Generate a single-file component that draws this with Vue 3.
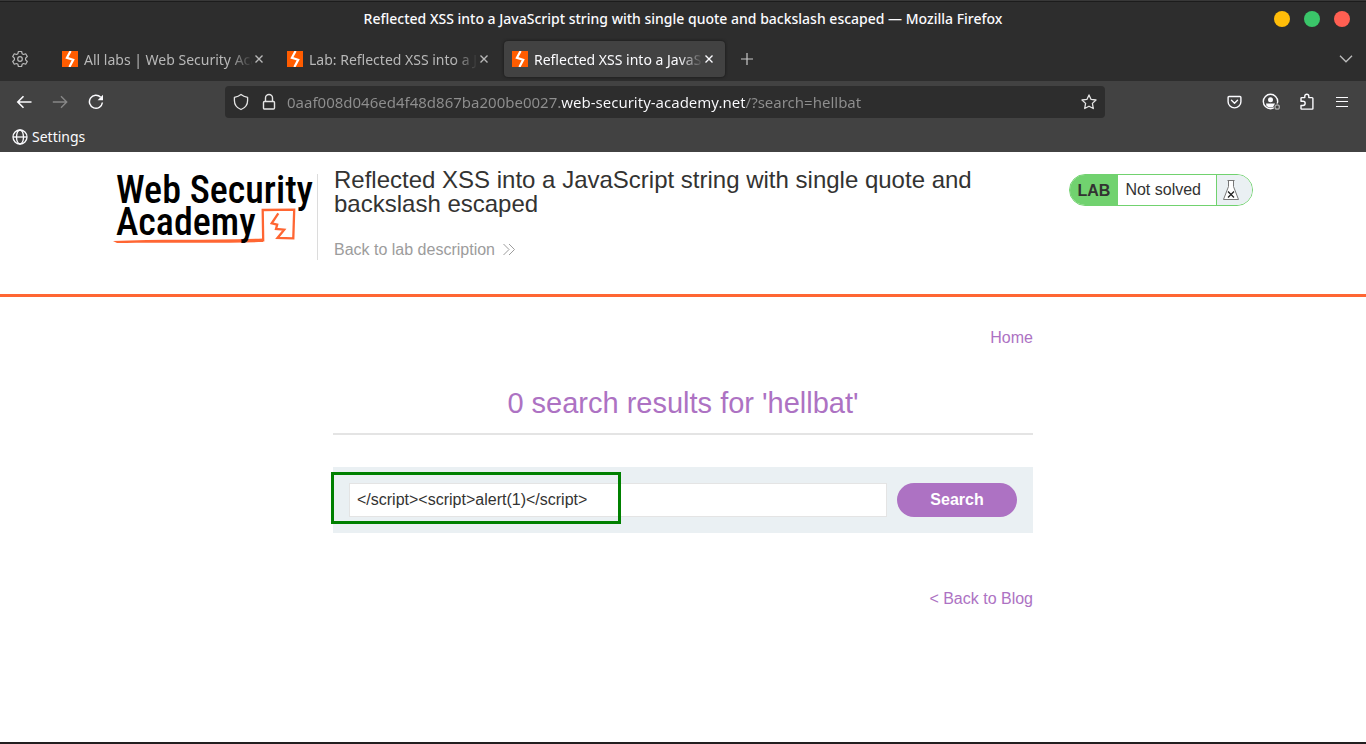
<script setup>
import { ref } from 'vue'

const windowTitle = 'Reflected XSS into a JavaScript string with single quote and backslash escaped — Mozilla Firefox'

const tabs = [
  { title: 'All labs | Web Security Academy', active: false },
  { title: 'Lab: Reflected XSS into a JavaScript string', active: false },
  { title: 'Reflected XSS into a JavaScript string', active: true },
]

const address = ref('0aaf008d046ed4f48d867ba200be0027.web-security-academy.net/?search=hellbat')
const term = ref('<\/script><script>alert(1)<\/script>')
</script>

<template>
  <div class="window">
    <header class="titlebar">
      <span class="window-title">{{ windowTitle }}</span>
      <div class="window-buttons">
        <button class="dot yellow" aria-label="Minimise"></button>
        <button class="dot green" aria-label="Maximise"></button>
        <button class="dot red" aria-label="Close"></button>
      </div>
    </header>

    <nav class="tabstrip" aria-label="Tabs">
      <button class="icon-btn gear" aria-label="Options">
        <svg width="18" height="18" viewBox="0 0 18 18" fill="none" stroke="#b8b8b8" stroke-width="1.2" stroke-linejoin="round">
          <path d="M7.4 1.5h3.2l.5 2.2 1.4.8 2.2-.7 1.6 2.7-1.7 1.6v1.8l1.7 1.6-1.6 2.7-2.2-.7-1.4.8-.5 2.2H7.4l-.5-2.2-1.4-.8-2.2.7-1.6-2.7 1.7-1.6V8.1L1.7 6.5l1.6-2.7 2.2.7 1.4-.8z" />
          <circle cx="9" cy="9" r="2.3" />
        </svg>
      </button>
      <div v-for="tab in tabs" :key="tab.title" class="tab" :class="{ active: tab.active }">
        <svg class="favicon" width="16" height="16" viewBox="0 0 16 16">
          <rect width="16" height="16" fill="#ff5c00" />
          <path d="M8.600 0 4.900 6.800 11.200 8.800 7.400 16" fill="none" stroke="#fff" stroke-width="2.200" />
        </svg>
        <button class="tab-title">{{ tab.title }}</button>
        <button class="tab-close" aria-label="Close tab">
          <svg width="8" height="8" viewBox="0 0 8 8" fill="none" stroke="currentColor" stroke-width="1.4"><path d="M.5.5l7 7M7.500.5l-7 7" /></svg>
        </button>
      </div>
      <button class="icon-btn plus" aria-label="New tab">
        <svg width="12" height="12" viewBox="0 0 12 12" fill="none" stroke="#c8c8c8" stroke-width="1.2"><path d="M6 0v12M0 6h12" /></svg>
      </button>
      <button class="icon-btn all-tabs" aria-label="List all tabs">
        <svg width="14" height="8" viewBox="0 0 14 8" fill="none" stroke="#bdbdbd" stroke-width="1.3"><path d="M1 .8l6 6 6-6" /></svg>
      </button>
    </nav>

    <div class="toolbar">
      <div class="nav-buttons">
        <button class="icon-btn" aria-label="Back">
          <svg width="16" height="16" viewBox="0 0 16 16" fill="none" stroke="#fbfbfe" stroke-width="1.6"><path d="M15.500 8H2M7.500 2.300L1.800 8l5.700 5.700" /></svg>
        </button>
        <button class="icon-btn" aria-label="Forward">
          <svg width="16" height="16" viewBox="0 0 16 16" fill="none" stroke="#878787" stroke-width="1.4"><path d="M.8 8h13.500M9 2.300L14.700 8 9 13.700" /></svg>
        </button>
        <button class="icon-btn" aria-label="Reload">
          <svg width="16" height="16" viewBox="0 0 16 16" fill="none" stroke="#fbfbfe" stroke-width="1.5"><path d="M12.700 3.300A6.500 6.500 0 1 0 14.400 8.500" /><path d="M15 .8v5.400H9.600z" fill="#fbfbfe" stroke="none" /></svg>
        </button>
      </div>

      <div class="urlbar">
        <svg width="16" height="18" viewBox="0 0 16 18" fill="none" stroke="#e4e4e4" stroke-width="1.3" stroke-linejoin="round"><path d="M8 1.500c2 1.700 4 2.400 6.600 2.900v3c0 4.300-2.300 7.300-6.600 9.100-4.300-1.800-6.600-4.800-6.600-9.100v-3C4 3.900 6 3.200 8 1.500z" /></svg>
        <svg class="lock" width="14" height="18" viewBox="0 0 14 18" fill="none" stroke="#e4e4e4" stroke-width="1.4"><rect x="1.500" y="8.500" width="11" height="7.500" rx="1" /><path d="M3.500 8.500V5a3.500 3.500 0 0 1 7 0v3.500" /></svg>
        <input v-model="address" class="address" type="text" aria-label="Address" />
        <button class="icon-btn" aria-label="Bookmark this page">
          <svg width="16" height="16" viewBox="0 0 16 16" fill="none" stroke="#e4e4e4" stroke-width="1.3" stroke-linejoin="round"><path d="M8 .9l2.100 4.500 4.900.6-3.600 3.400.9 5.100L8 12.200l-4.300 2.300.9-5.100L1 6l4.900-.6z" /></svg>
        </button>
      </div>

      <div class="tools">
        <button class="icon-btn" aria-label="Save to Pocket">
          <svg width="16" height="16" viewBox="0 0 16 16" fill="none" stroke="#fbfbfe" stroke-width="1.4" stroke-linejoin="round" stroke-linecap="round"><path d="M2 2.500h11a.9.900 0 0 1 .9.900v4.300a6.400 6.200 0 0 1-12.800 0V3.400a.9.900 0 0 1 .9-.9z" /><path d="M4.500 6.300l3 2.900 3-2.900" /></svg>
        </button>
        <button class="icon-btn" aria-label="Account">
          <svg width="19" height="18" viewBox="0 0 19 18" fill="none"><circle cx="8.500" cy="8.500" r="7.200" stroke="#fbfbfe" stroke-width="1.4" /><circle cx="8.500" cy="6.800" r="2.500" fill="#fbfbfe" /><path d="M4 10.500h9c0 2.500-2 3.900-4.500 3.900S4 13 4 10.500z" fill="#fbfbfe" /><circle cx="15.200" cy="14" r="3.600" fill="#424242" /><circle cx="15.200" cy="14" r="2.200" stroke="#aaa" stroke-width="1.3" /></svg>
        </button>
        <button class="icon-btn" aria-label="Extensions">
          <svg width="16" height="18" viewBox="0 0 16 18" fill="none" stroke="#fbfbfe" stroke-width="1.4" stroke-linejoin="round"><path d="M1 8.200V5.500a.9.900 0 0 1 .9-.9h2.900V3.200a2 2 0 0 1 4 0v1.400H12a.9.900 0 0 1 .9.900v10a.6.600 0 0 1-.6.600H1.700a.7.700 0 0 1-.7-.7v-2.900h2a1.800 1.800 0 0 0 0-4.300z" /></svg>
        </button>
        <button class="icon-btn" aria-label="Menu">
          <svg width="14" height="14" viewBox="0 0 14 14" fill="none" stroke="#fbfbfe" stroke-width="1.2"><path d="M1 2.500h12M1 6.500h12M1 11.500h12" /></svg>
        </button>
      </div>
    </div>

    <div class="bookmarks">
      <a class="bookmark" href="#">
        <svg width="16" height="16" viewBox="0 0 16 16" fill="none" stroke="#fbfbfe" stroke-width="1.3"><circle cx="8" cy="8" r="7" /><ellipse cx="8" cy="8" rx="3.500" ry="7" /><path d="M1 8h14" /></svg>
        <span>Settings</span>
      </a>
    </div>

    <div class="page">
      <section class="lab-header">
        <div class="lab-container">
          <a class="logo" href="#" aria-label="Web Security Academy">
            <svg width="200" height="86" viewBox="0 0 200 86">
              <path d="M0 67c45-2 100-.5 150-2.500V68C100 69.500 45 68 4 69z" fill="#ff6633" />
              <path d="M150.200 67.500 149.700 36l31.500-.3-.9 28.600-15.800-.3 6.700-8.300-8.200-.8 1.200-4.300-5.500-1.300 6.600-10" fill="none" stroke="#ff6633" stroke-width="2.3" />
              <text class="logo-text" x="3" y="29">Web Security</text>
              <text class="logo-text" x="3" y="61">Academy</text>
            </svg>
          </a>
          <div class="lab-title">
            <h2>Reflected XSS into a JavaScript string with single quote and backslash escaped</h2>
            <a class="back-link" href="#">
              <span>Back to lab description</span>
              <svg width="12" height="14" viewBox="0 0 12 14" fill="none" stroke="#9c9c9c" stroke-width="1"><path d="M.5 1L6 6.500.5 12M6 1l5.500 5.500L6 12" /></svg>
            </a>
          </div>
          <div class="lab-status">
            <span class="lab-tag">LAB</span>
            <p>Not solved</p>
            <span class="flask">
              <svg width="18" height="22" viewBox="0 0 18 22"><path d="M5.500 1.500h7M6.500 1.500v6L1.500 20.500h15l-5-13v-6" fill="#fff" stroke="#777" stroke-width="1" /><path d="M6 12.500l6 6M12 12.500l-6 6" stroke="#222" stroke-width="1.3" /></svg>
            </span>
          </div>
        </div>
      </section>

      <main class="content">
        <nav class="home"><a href="#">Home</a></nav>
        <h1>0 search results for 'hellbat'</h1>
        <form class="search" @submit.prevent>
          <input v-model="term" type="text" aria-label="Search the blog" />
          <button type="submit">Search</button>
          <div class="highlight"></div>
        </form>
        <div class="back-blog"><a href="#">&lt; Back to Blog</a></div>
      </main>
    </div>
  </div>
</template>

<style>
body {
  margin: 0;
  background: #fff;
}
</style>

<style scoped>
* {
  box-sizing: border-box;
}
button {
  border: 0;
  padding: 0;
  background: none;
  font: inherit;
  color: inherit;
}
a {
  text-decoration: none;
}
svg {
  display: block;
  flex: none;
}
.window {
  display: flex;
  flex-direction: column;
  min-height: 100vh;
  background: #2d2d2d;
  color: #fbfbfe;
  font: 14px/20px "Noto Sans", "Open Sans", sans-serif;
}
.titlebar {
  display: grid;
  grid-template-columns: 1fr auto 1fr;
  align-items: center;
  height: 38px;
  padding: 0 16px 2px;
  border-top: 1px solid #383838;
  box-shadow: inset 0 1px #1c1c1c;
}
.window-title {
  grid-column: 2;
  font-weight: 500;
}
.window-buttons {
  display: flex;
  justify-content: flex-end;
  gap: 14px;
}
.dot {
  width: 16px;
  height: 16px;
  border-radius: 50%;
}
.yellow { background: #ffbd09; }
.green { background: #3ac569; }
.red { background: #ff5f52; }

.icon-btn {
  display: flex;
  align-items: center;
  justify-content: center;
}
.tabstrip {
  display: flex;
  align-items: center;
  gap: 4px;
  height: 43px;
  padding: 0 13px 2px 11px;
}
.gear {
  width: 18px;
  margin-right: 21px;
}
.tab {
  display: flex;
  align-items: center;
  width: 221px;
  height: 36px;
  padding: 0 8px;
  border-radius: 4px;
  color: #b8b8b8;
}
.tab.active {
  background: #424242;
  color: #fbfbfe;
  box-shadow: 0 0 3px #151515;
}
.tab-title {
  flex: 1;
  min-width: 0;
  margin-left: 6px;
  padding-top: 2px;
  overflow: hidden;
  white-space: nowrap;
  text-align: left;
  mask-image: linear-gradient(to right, #000 calc(100% - 24px), transparent);
}
.tab-close {
  display: flex;
  margin: 0 4px 0 2px;
}
.plus {
  width: 36px;
  height: 36px;
}
.all-tabs {
  margin-left: auto;
}

.toolbar {
  display: flex;
  align-items: center;
  justify-content: space-between;
  height: 42px;
  padding: 0 17px 0 16px;
  background: #424242;
}
.nav-buttons,
.tools {
  display: flex;
  align-items: center;
  gap: 20px;
}
.tools {
  gap: 19px;
}
.nav-buttons {
  width: 209px;
}
.urlbar {
  display: flex;
  flex: 1;
  align-items: center;
  height: 32px;
  margin-right: 122px;
  padding: 0 8px;
  border-radius: 4px;
  background: #2d2d2d;
}
.lock {
  margin: 0 11px 0 13px;
}
.address {
  flex: 1;
  min-width: 0;
  border: 0;
  padding: 0;
  outline: 0;
  font: inherit;
  font-size: 15px;
  color: transparent;
  background: linear-gradient(to right, #8f8f8f 273px, #fbfbfe 273px 458px, #8f8f8f 458px);
  background-clip: text;
  -webkit-background-clip: text;
}
.bookmarks {
  display: flex;
  align-items: center;
  height: 29px;
  padding: 0 12px 2px;
  background: #424242;
}
.bookmark {
  display: flex;
  align-items: center;
  gap: 4px;
  color: #fbfbfe;
}

.page {
  flex: 1;
  background: #fff;
  border-bottom: 2px solid #231f20;
  color: #333332;
  font: 16px/20px "Liberation Sans", Arial, sans-serif;
}
.lab-header {
  padding: 16px 16px 34px;
  border-bottom: 3px solid #ff6633;
}
.lab-container {
  display: flex;
  align-items: flex-start;
  max-width: 1140px;
  margin: 0 auto;
}
.logo {
  margin-top: 6px;
  padding-right: 4px;
  border-right: 1px solid #dcdcdc;
}
.logo-text {
  font: 500 38px "Roboto Condensed", "Liberation Sans Narrow", Roboto, sans-serif;
  fill: #000;
}
.lab-title {
  flex: 1;
  padding-left: 16px;
}
h2 {
  max-width: 650px;
  margin: 0 0 24px;
  font-size: 24px;
  line-height: 24px;
  font-weight: 400;
}
.back-link {
  display: inline-flex;
  align-items: center;
  gap: 8px;
  color: #9c9c9c;
}
.lab-status {
  display: flex;
  height: 32px;
  margin-top: 6px;
  overflow: hidden;
  border: 1px solid #71d26f;
  border-radius: 16px;
  line-height: 30px;
}
.lab-tag {
  padding: 1px 8px 0;
  background: #71d26f;
  font-weight: 700;
}
.lab-status p {
  margin: 0;
  padding: 0 15px 0 7px;
}
.flask {
  display: flex;
  align-items: center;
  width: 36px;
  padding-left: 5px;
  border-left: 1px solid #71d26f;
  background: #eaf0f3;
}

.content {
  max-width: 700px;
  margin: 0 auto;
  padding-top: 31px;
}
.content a {
  color: #ad72c3;
}
.home,
.back-blog {
  text-align: right;
}
h1 {
  margin: 37px 0 32px;
  padding-bottom: 12px;
  border-bottom: 2px solid #e4e4e4;
  color: #ad72c3;
  font-size: 29px;
  line-height: 36px;
  font-weight: 400;
  text-align: center;
}
.search {
  position: relative;
  display: flex;
  gap: 10px;
  padding: 16px;
  background: #eaf0f3;
}
.search input {
  flex: 1;
  min-width: 0;
  height: 34px;
  padding: 0 7px;
  border: 1px solid #e4e4e4;
  background: #fff;
  color: #333332;
  font: inherit;
}
.search button {
  width: 120px;
  height: 34px;
  border-radius: 17px;
  background: #ad72c3;
  color: #fff;
  font-weight: 700;
}
.highlight {
  position: absolute;
  top: 5px;
  left: -2px;
  width: 290px;
  height: 52px;
  border: 3px solid #008000;
  pointer-events: none;
}
.back-blog {
  padding: 56px 0 24px;
}
</style>
